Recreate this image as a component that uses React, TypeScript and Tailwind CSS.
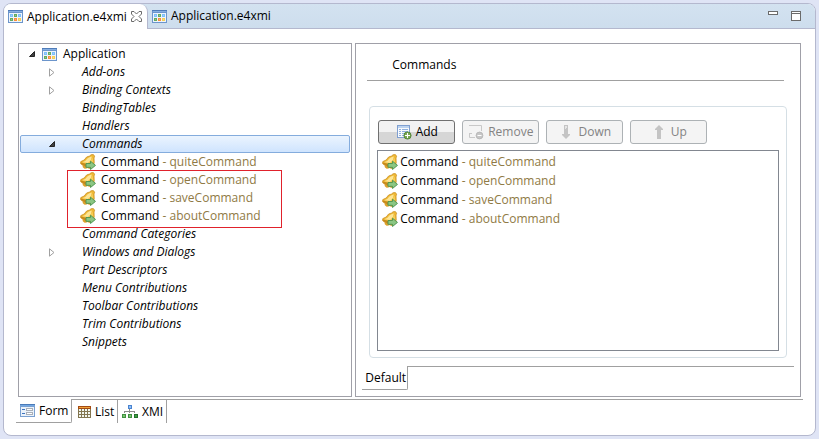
import { clsx } from 'clsx';

interface TreeRowProps {
  label: string;
  state?: 'open' | 'closed';
  selected?: boolean;
}

interface CommandRowProps {
  id: string;
}

interface ToolButtonProps {
  label: string;
  icon: React.ReactNode;
  disabled?: boolean;
}

const commandIds = ['quiteCommand', 'openCommand', 'saveCommand', 'aboutCommand'];

const cells = [
  { x: 2, y: 4, color: '#7cc0fb' },
  { x: 6, y: 4, color: '#63ab62' },
  { x: 10, y: 4, color: '#7cc0fb' },
  { x: 2, y: 8, color: '#63ab62' },
  { x: 6, y: 8, color: '#fb8c3c' },
  { x: 10, y: 8, color: '#f5cf57' },
];

function ModelIcon() {
  return (
    <svg width="15" height="13" viewBox="0 0 15 13" shapeRendering="crispEdges" className="shrink-0">
      <rect width="15" height="13" fill="#6c95cb" />
      <rect y="0" width="15" height="1" fill="#4f7cb9" />
      <rect x="1" y="1" width="13" height="1" fill="#86afe2" />
      <rect x="1" y="3" width="13" height="9" fill="#eef4fb" />
      {cells.map((c) => (
        <g key={`${c.x}-${c.y}`}>
          <rect x={c.x} y={c.y} width="3" height="3" fill={c.color} />
          <rect x={c.x + 1} y={c.y + 1} width="1" height="1" fill="#fff" opacity="0.3" />
        </g>
      ))}
    </svg>
  );
}

function CommandIcon() {
  return (
    <svg width="16" height="16" viewBox="0 0 16 16" className="shrink-0">
      <path
        d="M11 .8 13.4.6 14.6 2.2 14 4 14.2 9 12.6 13 9.6 14.4 4.6 12.6 .6 9.6 .8 7.6 4.2 6 6.6 3 9.6 2Z"
        fill="#efb936"
        stroke="#cb9122"
        strokeWidth="0.8"
      />
      <path d="M11.8 2.6 9.4 3.2 7.4 4.4 5.2 7 2.4 8.2 8 9 11 6Z" fill="#fde595" />
      <path d="M12.6 3.4 13.2 8 11.4 10 9 9.4Z" fill="#f6cf58" />
      <path d="M.8 8.4 5 9.4 9.4 12 9.6 14 4.8 12.6 .8 9.8Z" fill="#c78a1c" />
      <path d="M2.6 11.4 5.4 12.6 7 14.6 4.6 14.8 2.8 13.2Z" fill="#dda02a" />
      <path d="M6 9.5h4.5V7.2L15.5 11.4 10.5 15.5V13.3H6Z" fill="#8bc683" stroke="#4b9350" strokeWidth="0.9" />
    </svg>
  );
}

function CloseIcon() {
  return (
    <svg width="11" height="11" viewBox="0 0 11 11" className="shrink-0" fill="#fff" stroke="#6b6b6b">
      <path d="M.5.5h2.5L5.5 3 8 .5h2.5V3L8 5.5 10.5 8v2.5H8L5.5 8 3 10.5H.5V8L3 5.5.5 3Z" />
    </svg>
  );
}

function AddIcon() {
  return (
    <svg width="16" height="16" viewBox="0 0 16 16" className="shrink-0">
      <g shapeRendering="crispEdges">
        <rect x="1" y="1" width="13" height="13" fill="#7f9fd0" />
        <rect x="2" y="2" width="11" height="2" fill="#bcd3f0" />
        <rect x="2" y="4" width="11" height="9" fill="#f8fafd" />
        <path d="M3 5h9v1H3zM3 7h9v1H3zM3 9h9v1H3zM3 11h9v1H3z" fill="#8fb0de" />
        <path d="M5 4h1v9H5z" fill="#f8fafd" />
      </g>
      <circle cx="11.5" cy="11.5" r="3.6" fill="#7aa850" stroke="#4d8035" strokeWidth="0.9" />
      <path d="M11 9h1v2h2v1h-2v2h-1v-2H9v-1h2z" fill="#fff" />
    </svg>
  );
}

function RemoveIcon() {
  return (
    <svg width="16" height="16" viewBox="0 0 16 16" className="shrink-0">
      <path d="M1 1.5h12.5V7M1.5 10v3.5H7M1 9.5h3" fill="none" stroke="#c8c8c8" />
      <circle cx="11.5" cy="11.5" r="3.4" fill="#c6c6c6" stroke="#b2b2b2" strokeWidth="0.8" />
      <path d="M9.5 11h4v1h-4z" fill="#fff" />
    </svg>
  );
}

function DownIcon() {
  return (
    <svg width="16" height="16" viewBox="0 0 16 16" className="shrink-0">
      <path d="M6 1h4v9h2v1L8 15 4 11v-1h2z" fill="#c4c4c4" />
      <path d="M7 2h2v2H8v1H7z" fill="#e6e6e6" />
    </svg>
  );
}

function UpIcon() {
  return (
    <svg width="16" height="16" viewBox="0 0 16 16" className="shrink-0">
      <path d="M6 15h4V6h2V5L8 1 4 5v1h2z" fill="#c4c4c4" />
    </svg>
  );
}

function FormIcon() {
  return (
    <svg width="15" height="13" viewBox="0 0 15 13" shapeRendering="crispEdges" className="shrink-0">
      <rect width="15" height="13" fill="#7aa0d0" />
      <rect width="15" height="1" fill="#4a7ab8" />
      <rect x="1" y="1" width="13" height="1" fill="#72a8e4" />
      <rect x="1" y="3" width="13" height="9" fill="#eaf2fb" />
      <path d="M2 5h3v1H2zM2 9h3v1H2z" fill="#3e74bd" />
      <path d="M6 4h7v3H6zM6 8h7v3H6z" fill="#a9afb8" />
      <path d="M7 5h5v1H7zM7 9h5v1H7z" fill="#fff" />
    </svg>
  );
}

function ListIcon() {
  return (
    <svg width="13" height="12" viewBox="0 0 13 12" shapeRendering="crispEdges" className="shrink-0">
      <rect width="13" height="12" fill="#82754f" />
      <rect width="13" height="3" fill="#a34a12" />
      <rect x="1" y="1" width="11" height="1" fill="#f0a33a" />
      <path d="M1 3h2v2H1zM4 3h2v2H4zM7 3h2v2H7zM10 3h2v2h-2zM1 6h2v2H1zM4 6h2v2H4zM7 6h2v2H7zM10 6h2v2h-2zM1 9h2v2H1zM4 9h2v2H4zM7 9h2v2H7zM10 9h2v2h-2z" fill="#f2f5ee" />
    </svg>
  );
}

function XmiIcon() {
  return (
    <svg width="16" height="13" viewBox="0 0 16 13" shapeRendering="crispEdges" className="shrink-0">
      <rect x="6" width="4" height="4" fill="#4a83cf" />
      <rect x="7" y="1" width="2" height="2" fill="#8dc0fa" />
      <path d="M7 4h1v2h5v2h-1V7H8v1H7V7H3v1H2V6h5z" fill="#8b8b8b" />
      <path d="M0 9h4v4H0zM6 9h4v4H6z" fill="#3e9141" />
      <path d="M1 10h2v2H1zM7 10h2v2H7z" fill="#7cc36f" />
      <path d="M12 9h4v4h-4z" fill="#23702a" />
      <path d="M13 10h2v2h-2z" fill="#3f9e45" />
    </svg>
  );
}

function Twistie({ state }: { state: 'open' | 'closed' }) {
  return (
    <button type="button" aria-label={state === 'open' ? 'Collapse' : 'Expand'} className="flex w-2 justify-center">
      {state === 'open' ? (
        <svg width="6" height="6" viewBox="0 0 6 6">
          <path d="M5.5.5v5h-5z" fill="#404040" stroke="#262626" />
        </svg>
      ) : (
        <svg width="6" height="9" viewBox="0 0 6 9">
          <path d="M.5.8v7.4L5 4.5z" fill="#fff" stroke="#a0a0a0" />
        </svg>
      )}
    </button>
  );
}

function TreeRow({ label, state, selected }: TreeRowProps) {
  return (
    <li
      role="treeitem"
      aria-selected={!!selected}
      className={clsx(
        'flex h-[18px] items-center border pl-[27px]',
        selected ? 'rounded-xs border-[#84acdd] bg-linear-to-b from-[#ebf4fe] to-[#cfe4fe]' : 'border-transparent'
      )}
    >
      <span className="flex w-[34px]">{state && <Twistie state={state} />}</span>
      <span className="italic">{label}</span>
    </li>
  );
}

function CommandText({ id }: CommandRowProps) {
  return (
    <span className="whitespace-pre">
      Command<span className="text-[#8f7a45]"> - {id}</span>
    </span>
  );
}

function CommandTreeRow({ id }: CommandRowProps) {
  return (
    <li role="treeitem" className="flex h-[18px] items-center gap-[5px] pl-[60px]">
      <CommandIcon />
      <CommandText id={id} />
    </li>
  );
}

function ToolButton({ label, icon, disabled }: ToolButtonProps) {
  return (
    <button
      type="button"
      disabled={disabled}
      className={clsx(
        'flex h-6 w-[77px] items-center justify-center gap-1 rounded-[3px] border',
        disabled
          ? 'border-[#adb2b5] bg-[#f4f4f4] text-[#838383]'
          : 'border-[#707070] bg-linear-to-b from-[#f2f2f2] from-50% to-[#d6d6d6] to-50% text-black'
      )}
    >
      {icon}
      {label}
    </button>
  );
}

function ModelTree() {
  return (
    <ul role="tree" aria-label="Application model" className="border border-[#a0a0a8] px-px pt-px">
      <li role="treeitem" aria-expanded="true" className="flex h-[18px] items-center gap-1.5 pl-2">
        <Twistie state="open" />
        <ModelIcon />
        Application
      </li>
      <TreeRow label="Add-ons" state="closed" />
      <TreeRow label="Binding Contexts" state="closed" />
      <TreeRow label="BindingTables" />
      <TreeRow label="Handlers" />
      <TreeRow label="Commands" state="open" selected />
      <CommandTreeRow id="quiteCommand" />
      <li role="none" className="relative">
        <ul role="group">
          <CommandTreeRow id="openCommand" />
          <CommandTreeRow id="saveCommand" />
          <CommandTreeRow id="aboutCommand" />
        </ul>
        <span className="absolute -top-px left-[47px] h-[58px] w-[215px] border border-[#e0222c]" />
      </li>
      <TreeRow label="Command Categories" />
      <TreeRow label="Windows and Dialogs" state="closed" />
      <TreeRow label="Part Descriptors" />
      <TreeRow label="Menu Contributions" />
      <TreeRow label="Toolbar Contributions" />
      <TreeRow label="Trim Contributions" />
      <TreeRow label="Snippets" />
    </ul>
  );
}

function CommandsPanel() {
  return (
    <section className="flex flex-col border border-[#a0a0a8] px-1.5 pb-1.5">
      <h2 className="mr-2.5 ml-[5px] flex h-[37px] items-center border-b border-[#a0a0a0] pt-1.5 pl-[25px]">Commands</h2>
      <div className="mx-[7px] mt-[25px] flex flex-1 flex-col rounded-sm border border-[#d5dfe5] px-[7px] pt-[13px] pb-1.5">
        <div className="mb-1.5 flex gap-[7px] pl-px">
          <ToolButton label="Add" icon={<AddIcon />} />
          <ToolButton label="Remove" icon={<RemoveIcon />} disabled />
          <ToolButton label="Down" icon={<DownIcon />} disabled />
          <ToolButton label="Up" icon={<UpIcon />} disabled />
        </div>
        <ul className="flex-1 border border-[#828790] pt-px pl-1">
          {commandIds.map((id) => (
            <li key={id} className="flex h-[19px] items-center gap-0.5">
              <CommandIcon />
              <CommandText id={id} />
            </li>
          ))}
        </ul>
      </div>
      <div role="tablist" className="mt-2 flex">
        <button
          type="button"
          role="tab"
          aria-selected="true"
          className="h-6 w-[46px] rounded-br-xs border-r border-b border-[#a0a0a0] pl-[3px] text-left"
        >
          Default
        </button>
        <div className="flex-1 border-t border-[#a0a0a0]" />
      </div>
    </section>
  );
}

export default function App() {
  return (
    <div className="flex min-h-screen bg-[#dfe4f5] p-[3px] font-['Open_Sans',sans-serif] text-xs leading-4 text-black">
      <div className="flex flex-1 flex-col overflow-hidden rounded-lg border border-[#b4b8ce] bg-white">
        <header className="flex h-[25px] bg-linear-to-b from-[#d3e2f0] to-[#cddded]">
          <div role="tablist" className="flex">
            <button
              type="button"
              role="tab"
              aria-selected="true"
              className="flex w-36 items-center gap-1 rounded-tr-lg border-r border-[#b4b8ce] bg-white pl-1"
            >
              <ModelIcon />
              <span className="whitespace-nowrap">Application.e4xmi</span>
              <CloseIcon />
            </button>
            <button type="button" role="tab" aria-selected="false" className="flex items-center gap-1 border-b border-[#b4b8ce] pl-1">
              <ModelIcon />
              <span className="whitespace-nowrap">Application.e4xmi</span>
            </button>
          </div>
          <div className="flex flex-1 items-start justify-end gap-[13px] border-b border-[#b4b8ce] pt-[7px] pr-3.5">
            <button type="button" aria-label="Minimize" className="h-1 w-2.5 border border-[#6b6b6b] bg-white" />
            <button type="button" aria-label="Maximize" className="flex size-2.5 items-start border border-[#6b6b6b] bg-white pt-px">
              <span className="h-px flex-1 bg-[#6b6b6b]" />
            </button>
          </div>
        </header>

        <main className="mx-3.5 mt-3.5 grid flex-1 grid-cols-[3fr_4fr] gap-[3px]">
          <ModelTree />
          <CommandsPanel />
        </main>

        <footer role="tablist" className="mx-3 mt-0.5 mb-3 flex h-6">
          <button
            type="button"
            role="tab"
            aria-selected="true"
            className="flex w-14 items-center gap-1 rounded-br-xs border-r border-b border-[#a0a0a0] pl-1"
          >
            <FormIcon />
            Form
          </button>
          <button type="button" role="tab" aria-selected="false" className="flex w-[46px] items-center gap-1 border-t border-r border-[#a0a0a0] pl-1.5">
            <ListIcon />
            List
          </button>
          <button type="button" role="tab" aria-selected="false" className="flex w-[49px] items-center gap-1 border-t border-r border-[#a0a0a0] pl-1">
            <XmiIcon />
            XMI
          </button>
          <div className="flex-1 border-t border-[#a0a0a0]" />
        </footer>
      </div>
    </div>
  );
}
